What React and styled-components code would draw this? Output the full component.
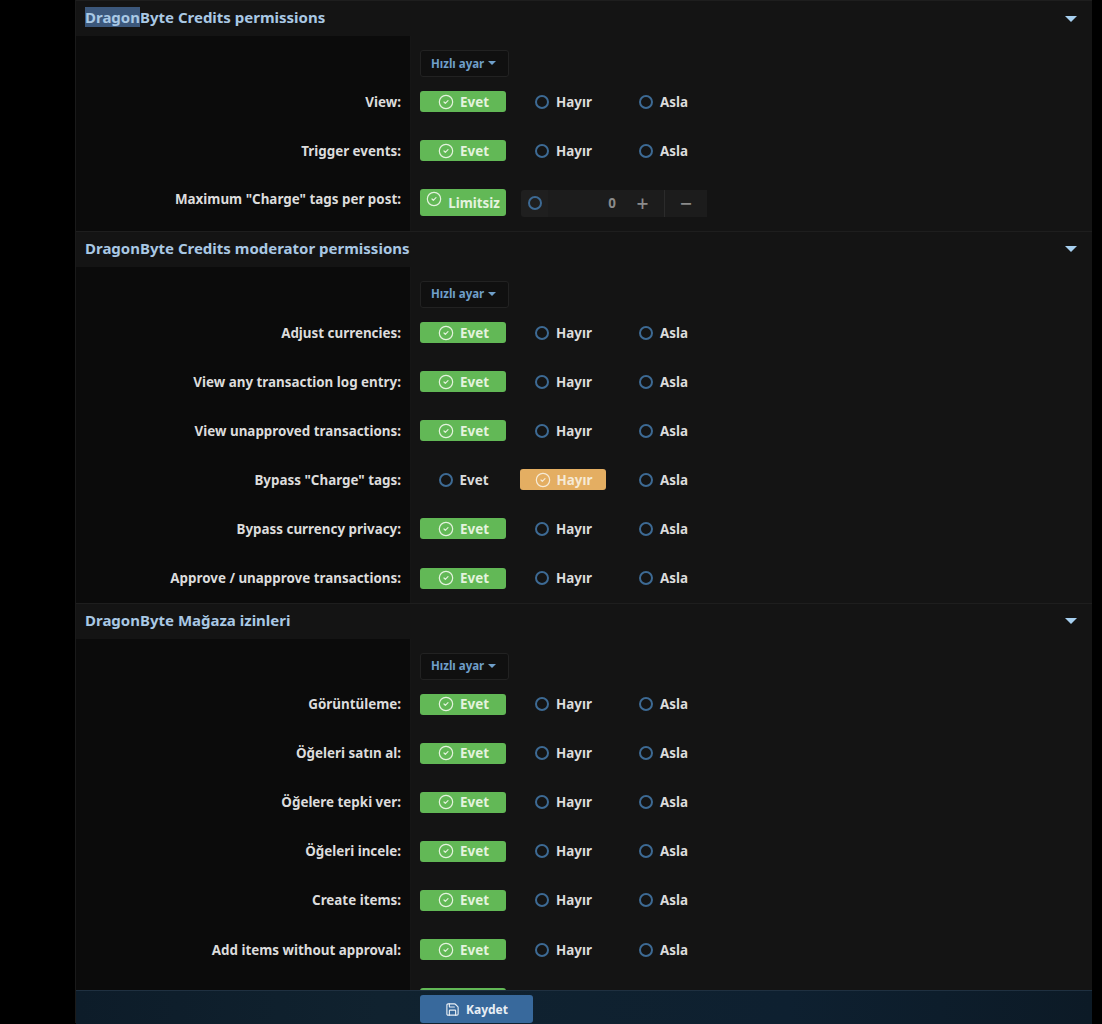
import React from 'react';
import styled, { createGlobalStyle } from 'styled-components';
import { CircleCheck, Save } from 'lucide-react';

const GlobalStyle = createGlobalStyle`
  html, body {
    margin: 0;
    padding: 0;
    background: #000;
    height: 1024px;
    overflow: hidden;
  }
  body {
    font-family: "Noto Sans", "Open Sans", "Liberation Sans", sans-serif;
  }
`;

const Page = styled.div`
  position: relative;
  width: 1102px;
  height: 1024px;
  overflow: hidden;
  background: #000;
`;

const Block = styled.div`
  margin: 0 10px 0 75px;
  width: 1017px;
  background: #141414;
  border-left: 1px solid #1a1a1a;
  box-sizing: border-box;
`;

const Section = styled.section`
  border-top: 1px solid #1e1e1e;
`;

const SectionHeader = styled.h3`
  display: flex;
  align-items: center;
  justify-content: space-between;
  height: 35px;
  margin: 0;
  padding: 0 15px 0 9px;
  background: #141414;
  color: #a9c8e4;
  font-size: 15px;
  font-weight: 700;
  line-height: 23px;
  white-space: pre;
`;

const SectionTitle = styled.span`
  margin-top: -2px;
`;

const Selected = styled.span`
  background: #3c587c;
`;

const Caret = styled.span`
  width: 0;
  height: 0;
  border-left: 6px solid transparent;
  border-right: 6px solid transparent;
  border-top: 6px solid #a7d0f0;
`;

const Body = styled.div`
  display: grid;
  grid-template-columns: 334px 1fr;
`;

const LabelCell = styled.div`
  display: flex;
  align-items: ${props => (props.$top ? 'flex-start' : 'center')};
  justify-content: flex-end;
  height: ${props => props.$height || 49.1}px;
  padding: ${props => (props.$top ? '15px' : '0')} 9px 0 0;
  box-sizing: border-box;
  background: #0b0b0b;
  color: #dcdcdc;
  font-size: 13.4px;
  font-weight: 700;
  white-space: nowrap;
`;

const ControlCell = styled.div`
  display: grid;
  grid-template-columns: 86px 86px 86px;
  column-gap: 14px;
  align-items: center;
  height: ${props => props.$height || 49.1}px;
  padding-left: 9px;
  box-sizing: border-box;
  border-left: 1px solid #161616;
`;

const QuickCell = styled.div`
  height: 41px;
  padding: 14px 0 0 9px;
  box-sizing: border-box;
  border-left: 1px solid #161616;
`;

const QuickButton = styled.button`
  display: inline-flex;
  align-items: center;
  gap: 4px;
  width: 89px;
  height: 27px;
  padding: 0 0 1px 10px;
  box-sizing: border-box;
  background: #101010;
  border: 1px solid #222;
  border-radius: 3px;
  color: #6f9fc9;
  font-family: inherit;
  font-size: 11.5px;
  font-weight: 700;
`;

const SmallCaret = styled.span`
  width: 0;
  height: 0;
  border-left: 4px solid transparent;
  border-right: 4px solid transparent;
  border-top: 4px solid #6f9fc9;
`;

const colors = { green: '#62b856', orange: '#e4ae62' };
const inks = { green: '#e4f3de', orange: '#f6ead6' };

const Choice = styled.div`
  display: flex;
  align-items: center;
  justify-content: center;
  gap: ${props => (props.$tone ? 6 : 7)}px;
  height: ${props => (props.$tall ? 27 : 21)}px;
  margin-bottom: ${props => (props.$tall ? '1px' : '0')};
  padding-left: ${props => (props.$shift ? '1px' : '0')};
  box-sizing: border-box;
  border-radius: 3px;
  background: ${props => colors[props.$tone] || 'transparent'};
  color: ${props => inks[props.$tone] || '#dcdcdc'};
  font-size: 13.4px;
  font-weight: 700;
  svg {
    flex: none;
    margin-top: ${props => (props.$tall ? '-7px' : '0')};
  }
`;

const Radio = styled.span`
  flex: none;
  width: 10px;
  height: 10px;
  border: 2px solid #3d6a94;
  border-radius: 50%;
`;

const NumberBox = styled.div`
  display: flex;
  align-items: center;
  grid-column: 2 / 4;
  width: 186px;
  height: 27px;
  margin-left: 1px;
  border-radius: 3px;
  background: #1f1f1f;
  color: #8b8b8b;
  font-size: 13.4px;
  font-weight: 700;
`;

const NumberRadio = styled.div`
  display: flex;
  align-items: center;
  justify-content: center;
  width: 27px;
  height: 100%;
`;

const NumberValue = styled.div`
  flex: 1;
  height: 100%;
  line-height: 27px;
  padding-right: 5px;
  text-align: right;
  background: #1c1c1c;
`;

const Step = styled.div`
  display: flex;
  align-items: center;
  justify-content: center;
  width: ${props => props.$width}px;
  height: 100%;
  border-left: ${props => (props.$split ? '1px solid #2b2b2b' : 'none')};
  background: #1c1c1c;
  font-size: 21px;
  font-weight: 500;
`;

const Footer = styled.div`
  position: absolute;
  left: 76px;
  bottom: 0;
  display: flex;
  width: 1016px;
  height: 34px;
  padding: 4px 0 0 344px;
  box-sizing: border-box;
  border-top: 1px solid #1f3040;
  background: linear-gradient(90deg, #0d1c29, #10222f 30%, #0e2030 70%, #0c1a26);
`;

const SaveButton = styled.button`
  display: flex;
  align-items: center;
  justify-content: center;
  gap: 6px;
  width: 113px;
  height: 28px;
  padding: 0;
  border: none;
  border-radius: 3px;
  background: #38699c;
  color: #e8eef4;
  font-family: inherit;
  font-size: 12px;
  font-weight: 700;
`;

const sections = [
  {
    title: 'DragonByte Credits permissions',
    mark: 'Dragon',
    rows: [
      { label: 'View:' },
      { label: 'Trigger events:' },
      { label: 'Maximum "Charge" tags per post:', limit: true },
    ],
  },
  {
    title: 'DragonByte Credits moderator permissions',
    rows: [
      { label: 'Adjust currencies:' },
      { label: 'View any transaction log entry:' },
      { label: 'View unapproved transactions:' },
      { label: 'Bypass "Charge" tags:', value: 'Hayır' },
      { label: 'Bypass currency privacy:' },
      { label: 'Approve / unapprove transactions:' },
    ],
  },
  {
    title: 'DragonByte Mağaza izinleri',
    rows: [
      { label: 'Görüntüleme:' },
      { label: 'Öğeleri satın al:' },
      { label: 'Öğelere tepki ver:' },
      { label: 'Öğeleri incele:' },
      { label: 'Create items:' },
      { label: 'Add items without approval:' },
      { label: '', stub: true },
    ],
  },
];

const options = ['Evet', 'Hayır', 'Asla'];

const PermissionRow = ({ label, value = 'Evet', limit, stub }) => {
  if (stub) {
    // only the top edge of this row shows above the save bar
    return (
      <>
        <LabelCell />
        <ControlCell><Choice $tone="green" /></ControlCell>
      </>
    );
  }
  if (limit) {
    return (
      <>
        <LabelCell $top $height={55.8}>{label}</LabelCell>
        <ControlCell $height={55.8}>
          <Choice $tone="green" $tall>
            <CircleCheck size={16} strokeWidth={1.8} />
            Limitsiz
          </Choice>
          <NumberBox>
            <NumberRadio><Radio /></NumberRadio>
            <NumberValue>0</NumberValue>
            <Step $width={43}>+</Step>
            <Step $width={42} $split>−</Step>
          </NumberBox>
        </ControlCell>
      </>
    );
  }
  return (
    <>
      <LabelCell>{label}</LabelCell>
      <ControlCell>
        {options.map(option => {
          const active = option === value;
          return (
            <Choice
              key={option}
              $tone={active ? (option === 'Evet' ? 'green' : 'orange') : null}
              $shift
            >
              {active ? <CircleCheck size={16} strokeWidth={1.8} /> : <Radio />}
              {option}
            </Choice>
          );
        })}
      </ControlCell>
    </>
  );
};

const App = () => (
  <Page>
    <GlobalStyle />
    <Block>
      {sections.map(section => (
        <Section key={section.title}>
          <SectionHeader>
            <SectionTitle>
              {section.mark && <Selected>{section.mark}</Selected>}
              {section.mark ? section.title.slice(section.mark.length) : section.title}
            </SectionTitle>
            <Caret />
          </SectionHeader>
          <Body>
            <LabelCell $height={41} />
            <QuickCell>
              <QuickButton>Hızlı ayar <SmallCaret /></QuickButton>
            </QuickCell>
            {section.rows.map((row, i) => (
              <PermissionRow key={i} {...row} />
            ))}
          </Body>
        </Section>
      ))}
    </Block>
    <Footer>
      <SaveButton><Save size={15} strokeWidth={1.8} />Kaydet</SaveButton>
    </Footer>
  </Page>
);

export default App;
